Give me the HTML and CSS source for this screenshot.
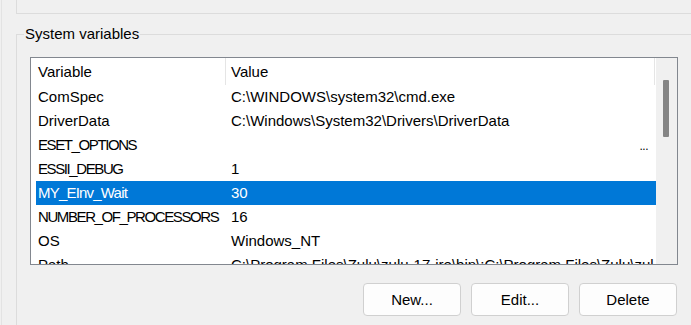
FILE: index.html
```html
<!DOCTYPE html>
<html lang="en">
<head>
<meta charset="utf-8">
<title>System variables</title>
<link rel="stylesheet" href="styles.css">
</head>
<body>
<div class="page">
  <div class="top-group"></div>
  <fieldset class="group">
    <legend class="group-label">System variables</legend>
    <div class="panel">
      <div class="listview">
        <div class="list">
          <div class="header">
            <div class="h1">Variable</div>
            <div class="h2">Value</div>
          </div>
          <div class="row"><div class="c1">ComSpec</div><div class="c2">C:\WINDOWS\system32\cmd.exe</div></div>
          <div class="row"><div class="c1">DriverData</div><div class="c2">C:\Windows\System32\Drivers\DriverData</div></div>
          <div class="row"><div class="c1 caps">ESET_OPTIONS</div><div class="c2 trunc"><span class="dots">...</span></div></div>
          <div class="row"><div class="c1 caps">ESSII_DEBUG</div><div class="c2">1</div></div>
          <div class="row selected"><div class="c1 mixed">MY_EInv_Wait</div><div class="c2">30</div></div>
          <div class="row"><div class="c1 caps">NUMBER_OF_PROCESSORS</div><div class="c2">16</div></div>
          <div class="row"><div class="c1">OS</div><div class="c2">Windows_NT</div></div>
          <div class="row"><div class="c1">Path</div><div class="c2">C:\Program Files\Zulu\zulu-17-jre\bin\;C:\Program Files\Zulu\zulu-17\bin\;C:\WINDOWS\system32</div></div>
        </div>
        <div class="scrollbar"><div class="thumb"></div></div>
      </div>
      <div class="buttons">
        <button class="btn" type="button">New...</button>
        <button class="btn" type="button">Edit...</button>
        <button class="btn" type="button">Delete</button>
      </div>
    </div>
  </fieldset>
</div>
</body>
</html>
```

FILE: styles.css
```css
html, body {
  margin: 0;
  padding: 0;
}

body {
  background: #f0f0f0;
  font-family: "Liberation Sans", Arial, sans-serif;
  font-size: 15px;
  color: #000;
  overflow: hidden;
  height: 325px;
}

.page {
  margin-left: 1px;
  border-left: 1px solid #e3e3e3;
  height: 325px;
  overflow: hidden;
}

.top-group {
  margin-left: 14px;
  height: 13px;
  border-left: 1px solid #dcdcdc;
  border-bottom: 1px solid #dcdcdc;
}

.group {
  margin: 11px -20px 0 14px;
  padding: 14px 0 0 7px;
  border: 1px solid #dcdcdc;
  border-right: none;
  border-bottom: none;
  min-width: 0;
  height: 330px;
}

.group-label {
  padding: 0 1px;
  line-height: 18px;
}

.panel {
  margin-left: 6px;
  width: 648px;
}

.listview {
  display: flex;
  height: 206px;
  border: 1px solid #82878f;
  background: #fff;
}

.list {
  flex: 1;
  padding-left: 5px;
  overflow: hidden;
}

.header {
  display: flex;
  height: 27px;
  line-height: 27px;
  width: 620px;
}

.h1 {
  width: 190px;
  box-sizing: border-box;
  padding-left: 2px;
  border-right: 1px solid #e5e5e5;
}

.h2 {
  width: 429px;
  box-sizing: border-box;
  padding-left: 5px;
  border-right: 1px solid #e5e5e5;
}

.row {
  display: flex;
  height: 24px;
  line-height: 24px;
  width: 620px;
  white-space: nowrap;
}

.c1 {
  width: 189px;
  flex: none;
  box-sizing: border-box;
  padding-left: 2px;
  overflow: hidden;
}

.c2 {
  width: 429px;
  flex: none;
  box-sizing: border-box;
  padding-left: 6px;
  overflow: hidden;
}

.caps {
  letter-spacing: -1.4px;
}

.mixed {
  letter-spacing: -0.8px;
}

.trunc {
  text-align: right;
  padding-right: 6px;
}

.dots {
  font-size: 12px;
  letter-spacing: -0.5px;
}

.selected {
  background: #0078d7;
  color: #fff;
}

.scrollbar {
  width: 21px;
  flex: none;
  background: #f0f0f0;
  padding: 22px 0 0 7px;
  box-sizing: border-box;
}

.thumb {
  width: 6px;
  height: 57px;
  background: #858585;
  border-radius: 1px;
}

.buttons {
  display: flex;
  justify-content: flex-end;
  gap: 10px;
  margin-top: 18px;
  padding-right: 1px;
}

.btn {
  width: 98px;
  height: 33px;
  box-sizing: border-box;
  border: 1px solid #d0d0d0;
  border-radius: 4px;
  background: #fdfdfd;
  font-family: inherit;
  font-size: 15px;
  color: #000;
  padding: 0;
}
```
